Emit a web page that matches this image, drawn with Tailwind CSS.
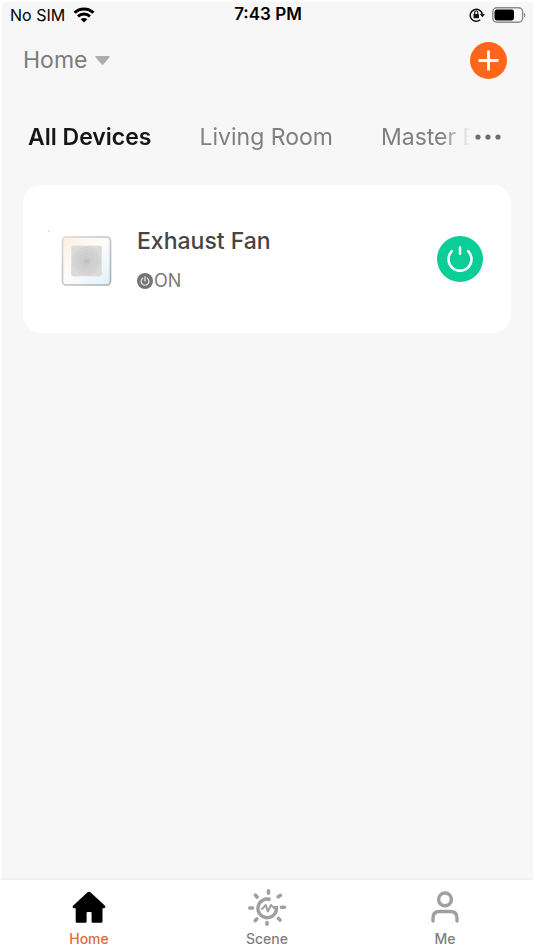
<!DOCTYPE html>
<html lang="en">
<head>
<meta charset="utf-8">
<meta name="viewport" content="width=device-width, initial-scale=1">
<title>Home</title>
<script src="https://cdn.jsdelivr.net/npm/@tailwindcss/browser@4"></script>
</head>
<body class="bg-white font-['Inter','Liberation_Sans',sans-serif]">
<div class="flex min-h-screen flex-col">
<div class="flex flex-1 flex-col border-t-2 border-r border-l-2 border-white bg-[#f7f7f7]">
  <div class="grid h-[26px] grid-cols-3 items-center pr-[7px] pl-2 text-black">
    <div class="flex items-center gap-2 text-base">
      <span class="whitespace-nowrap">No SIM</span>
      <svg class="h-4 w-[22px]" viewBox="0 0 22 16" fill="none" stroke="#000" stroke-width="3" aria-label="Wi-Fi">
        <path d="M1.500 5.700C6.800.6 15.200.6 20.500 5.700"/>
        <path d="M5 9.300C8.400 6.200 13.600 6.200 17 9.300"/>
        <path d="M11 15.500 7.700 12.200C9.600 10.700 12.400 10.700 14.300 12.200Z" fill="#000" stroke="none"/>
      </svg>
    </div>
    <span class="text-center text-[17px] font-semibold whitespace-nowrap">7:43 PM</span>
    <div class="flex items-center justify-end gap-[7px]">
      <svg class="size-4" viewBox="0 0 16 16" fill="none" stroke="#111" aria-label="Rotation lock">
        <path d="M11.300 12.800A6 6 0 1 1 13.200 7.500" stroke-width="1.500"/>
        <path d="M10.800 7H16L13.400 10.300Z" fill="#111" stroke="none"/>
        <rect x="4.500" y="7" width="5.500" height="4.200" rx=".6" fill="#111" stroke="none"/>
        <path d="M5.700 7V5.600a1.550 1.550 0 0 1 3.100 0V7" stroke-width="1.100"/>
      </svg>
      <svg class="h-4 w-[34px]" viewBox="0 0 34 16" fill="none" aria-label="Battery">
        <rect x=".8" y=".8" width="29.800" height="14.400" rx="4" stroke="#8c8c8c" stroke-width="1.400"/>
        <rect x="2.500" y="2.600" width="19.500" height="10.800" rx="2.300" fill="#000"/>
        <path d="M32 5.500c1.800.8 1.800 4.200 0 5Z" fill="#8c8c8c"/>
      </svg>
    </div>
  </div>

  <header class="flex h-16 items-center justify-between pr-[26px] pl-[21px]">
    <button type="button" class="flex items-center gap-2 text-[23px] text-[#7c7c7c]">
      Home
      <svg class="h-[9px] w-[15px]" viewBox="0 0 15 9" aria-hidden="true"><path d="M1 0H14Q15.300.3 14.300 1.500L8.500 8.200Q7.500 9.200 6.500 8.200L.7 1.500Q-.3.300 1 0Z" fill="#adadad"/></svg>
    </button>
    <button type="button" aria-label="Add device" class="size-[37px]">
      <svg class="size-full" viewBox="0 0 37 37" aria-hidden="true"><circle cx="18.500" cy="18.500" r="18.500" fill="#ff661a"/><path d="M18.500 8.500V28.500M8.500 18.500H28.500" stroke="#fff" stroke-width="2.800"/></svg>
    </button>
  </header>

  <nav class="flex h-[93px] items-center pr-8 pb-1 pl-[26px] text-[23px]/8 text-[#808080]" aria-label="Rooms">
    <div class="flex min-w-0 flex-1 gap-12 overflow-hidden whitespace-nowrap [mask-image:linear-gradient(to_right,#000_calc(100%-30px),transparent)]">
      <a href="#all" class="font-semibold text-[#161616]">All Devices</a>
      <a href="#living">Living Room</a>
      <a href="#master">Master Bedroom</a>
    </div>
    <button type="button" aria-label="More rooms" class="flex pl-1">
      <svg class="h-2 w-[26px]" viewBox="0 0 26 8" fill="#6d6d6d" aria-hidden="true"><circle cx="3" cy="4" r="2.600"/><circle cx="13" cy="4" r="2.600"/><circle cx="23" cy="4" r="2.600"/></svg>
    </button>
  </nav>

  <main class="flex-1 pr-[22px] pl-[21px]">
    <article class="flex h-[148px] items-center rounded-[18px] bg-white pr-7 pl-6">
      <svg class="h-16 w-[65px] shrink-0" viewBox="0 0 65 64" role="img" aria-label="Exhaust fan">
        <defs>
          <linearGradient id="glow" x1="0" y1="0" x2="1" y2="1"><stop offset="0" stop-color="#fff0df"/><stop offset=".48" stop-color="#fcfcfa"/><stop offset="1" stop-color="#dff1fb"/></linearGradient>
          <linearGradient id="rim" x1="0" y1="0" x2="1" y2="1"><stop offset="0" stop-color="#d8d8d8"/><stop offset="1" stop-color="#a9adb1"/></linearGradient>
          <radialGradient id="grille"><stop offset="0" stop-color="#cacaca"/><stop offset=".7" stop-color="#d3d3d3"/><stop offset="1" stop-color="#dadada"/></radialGradient>
        </defs>
        <circle cx="2" cy="4" r=".7" fill="#bbb"/>
        <rect x="15.500" y="10" width="48" height="48" rx="4" fill="url(#glow)" stroke="url(#rim)" stroke-width="1.600"/>
        <rect x="24.500" y="19" width="30" height="30" rx="2" fill="url(#grille)" stroke="#e3e0dc"/>
        <g fill="none" stroke="#c8c8c8" stroke-width=".8" stroke-dasharray="1 1"><circle cx="39.500" cy="34" r="5"/><circle cx="39.500" cy="34" r="8"/><circle cx="39.500" cy="34" r="11"/><circle cx="39.500" cy="34" r="13.500"/></g>
        <circle cx="39.500" cy="34" r="3" fill="#d2d2d2" stroke="#b8b8b8" stroke-width=".5"/>
        <path d="M37.500 33.200H41.500M37.500 35H41.500" stroke="#a2a2a2" stroke-width=".7"/>
      </svg>
      <div class="flex min-w-0 flex-1 flex-col gap-3 pt-1 pl-[25px]">
        <h2 class="text-[23px]/7 font-medium text-[#454545]">Exhaust Fan</h2>
        <p class="flex items-center gap-px text-lg/7 text-[#7a7a7a]">
          <svg class="size-4 shrink-0" viewBox="0 0 16 16" fill="none" aria-hidden="true"><circle cx="8" cy="8" r="8" fill="#747474"/><path d="M5.700 5.200a3.900 3.900 0 1 0 4.600 0M8 3.700V8" stroke="#eee" stroke-width="1.200" stroke-linecap="round"/></svg>
          <span>ON</span>
        </p>
      </div>
      <button type="button" aria-label="Turn off Exhaust Fan" class="size-[46px] shrink-0">
        <svg class="size-full" viewBox="0 0 46 46" fill="none" aria-hidden="true"><circle cx="23" cy="23" r="23" fill="#0acd98"/><path d="M14.900 15.200a11.500 11.500 0 1 0 16.200 0M23 11.500V17.800" stroke="#fff" stroke-width="2.500" stroke-linecap="round"/></svg>
      </button>
    </article>
  </main>
</div>

  <nav class="grid h-[70px] grid-cols-3 bg-white text-sm/6 font-medium text-[#808080] shadow-[0_-1px_3px_rgba(0,0,0,0.06)]" aria-label="Main">
    <a href="#home" class="flex flex-col items-center pt-[7px] text-[#e3683a]" aria-current="page">
      <svg class="size-10" viewBox="0 0 40 40" aria-hidden="true"><path d="M18.600 5.300Q20 4 21.400 5.300L36 18.800Q37.300 20.800 35 21.200H33.500V34.500Q33.500 35.800 32.200 35.800H23.600Q22.600 35.800 22.600 34.500V26Q22.600 25 21.600 25H18.600Q17.600 25 17.600 26V34.500Q17.600 35.800 16.400 35.800H7.800Q6.700 35.800 6.700 34.500V21.200H5Q2.700 20.800 4 18.800Z" fill="#000"/></svg>
      <span>Home</span>
    </a>
    <a href="#scene" class="flex flex-col items-center pt-[7px]">
      <svg class="size-10" viewBox="0 0 40 40" fill="none" stroke="#a0a0a0" stroke-linecap="round" aria-hidden="true">
        <path d="M23.500 12.700A9.300 9.300 0 1 0 29.500 20.600H26.500" stroke-width="3.400" stroke-linecap="butt"/>
        <path d="M15 22 18.800 18 20.800 24.500 24 18 26.500 20.600" stroke-width="2" stroke-linejoin="round"/>
        <path d="M21.500 3.700V6.200M8.500 8.200 10 10M2.800 21H5.500M8.300 33.600 9.800 32M20 35.500V37.300M31.500 31.500 33 33M34.500 20.300H37.500M31.300 9.800 33.300 8.400" stroke-width="3.600"/>
      </svg>
      <span>Scene</span>
    </a>
    <a href="#me" class="flex flex-col items-center pt-[7px]">
      <svg class="size-10" viewBox="0 0 40 40" fill="none" stroke="#a0a0a0" stroke-width="3.400" stroke-linecap="round" aria-hidden="true"><circle cx="20" cy="12.400" r="6.400"/><path d="M8 34V31Q8 24.500 14.500 24.500H25.500Q32 24.500 32 31V34"/></svg>
      <span>Me</span>
    </a>
  </nav>
</div>
</body>
</html>
